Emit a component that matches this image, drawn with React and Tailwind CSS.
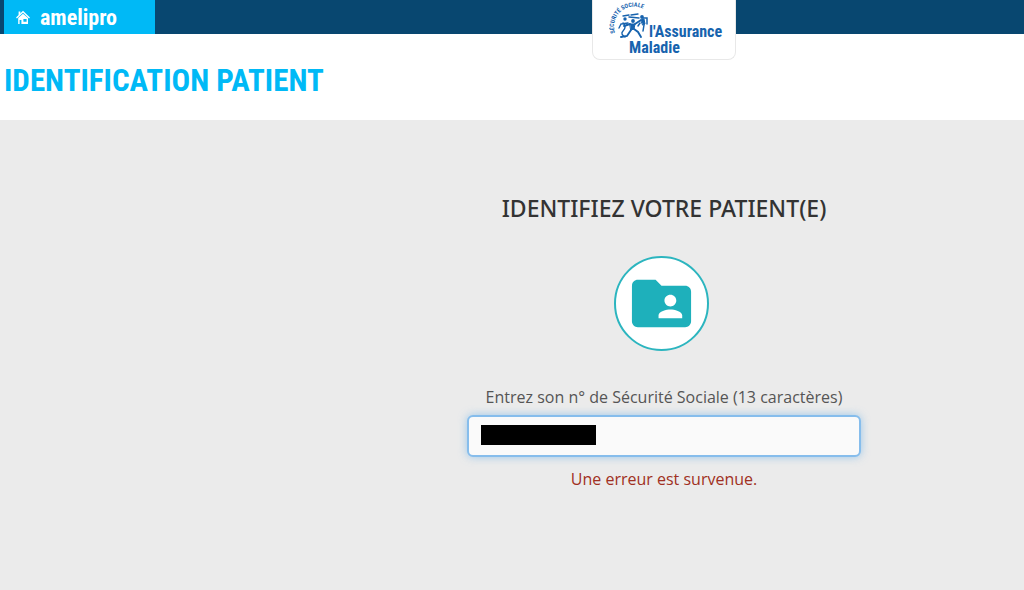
import { useState } from 'react';
import { MdFolderShared } from 'react-icons/md';

function HomeIcon() {
  return (
    <svg viewBox="0 0 14 14" className="h-3.5 w-3.5" fill="none" stroke="currentColor" aria-hidden="true">
      <path d="M0.5 8 L7 1.7 L13.5 8" strokeWidth="1.3" />
      <path d="M3.5 1.5 V5" strokeWidth="1.8" />
      <path fillRule="evenodd" fill="currentColor" stroke="none" d="M2.2 8 L7 3.7 L12 8 V14 H2.2 Z M3.6 10 V14 H5.4 V10 Z M7.4 9 V11.8 H10.6 V9 Z" />
    </svg>
  );
}

function LogoFigures() {
  return (
    <svg viewBox="0 0 44 42" className="absolute left-4 top-0 h-[42px] w-11" fill="none" stroke="currentColor" strokeLinecap="round" aria-hidden="true">
      <path id="logo-arc" d="M6 33 A20 20 0 0 1 43 18" stroke="none" />
      <text className="font-['Roboto_Condensed','Liberation_Sans',sans-serif] text-[6px] font-bold" fill="currentColor" stroke="none">
        <textPath href="#logo-arc">SÉCURITÉ SOCIALE</textPath>
      </text>
      {/* Left figure */}
      <circle cx="16" cy="19" r="1.7" fill="currentColor" stroke="none" />
      <path d="M12 24 L19 23 M14 23 Q18 27 14 31 Q11 34 16 37 M12 24 L10 28 M14 16 L20 15" strokeWidth="1.4" />
      {/* Centre figure */}
      <circle cx="24" cy="21" r="1.9" fill="currentColor" stroke="none" />
      <path d="M21 24 L26 24 L25 29 L22 30 Z" fill="currentColor" strokeWidth="1" />
      <path d="M21 24 L15 26 M26 24 L32 20 M22 30 L18 36 L12 37 M25 29 L29 32 L32 37" strokeWidth="1.9" />
      {/* Right figure */}
      <circle cx="33" cy="17" r="1.9" fill="currentColor" stroke="none" />
      <path d="M32 20 L35 19 L36 24 L34 25 Z" fill="currentColor" strokeWidth="1" />
      <path d="M20 17 L30 18 M34 18 L38 18 L38 24 M35 25 L34 31 M31 23 L29 26" strokeWidth="1.5" />
      <path d="M22 15 L29 14" strokeWidth="1.3" />
    </svg>
  );
}

export default function App() {
  const [nir, setNir] = useState('');

  return (
    <div className="min-h-screen bg-[#ebebeb] font-['Open_Sans',sans-serif]">
      {/* Top bar */}
      <header className="relative h-[34px] bg-[#084770] pl-1">
        <a
          href="#accueil"
          className="inline-flex h-full w-[151px] items-center gap-2.5 bg-[#00b9f6] pl-3 font-['Roboto_Condensed','Liberation_Sans_Narrow','Liberation_Sans',sans-serif] text-[22px] font-bold text-white"
        >
          <HomeIcon />
          amelipro
        </a>
        <div className="absolute inset-x-0 top-0 flex justify-center pl-76 pointer-events-none">
          <div className="relative h-[60px] w-36 rounded-b-lg border border-t-0 border-[#e8e8e8] bg-white font-['Roboto_Condensed','Liberation_Sans_Narrow','Liberation_Sans',sans-serif] text-base leading-4 font-bold text-[#1763ae]">
            <LogoFigures />
            <p className="pl-9 pt-6">
              <span className="block pl-5">l'Assurance</span>
              Maladie
            </p>
          </div>
        </div>
      </header>

      <div className="bg-white px-1 pt-6 pb-4">
        <h1 className="whitespace-nowrap font-['Roboto_Condensed','Liberation_Sans_Narrow','Liberation_Sans',sans-serif] text-[31px] leading-[46px] font-bold text-[#00b9f6]">
          IDENTIFICATION PATIENT
        </h1>
      </div>

      {/* Patient form */}
      <main className="flex justify-center pl-76 pt-18">
        <form className="flex w-[394px] flex-col items-center" onSubmit={e => e.preventDefault()}>
          <h2 className="whitespace-nowrap font-['Noto_Sans','Open_Sans',sans-serif] text-[23px] leading-8 font-medium text-[#333]">IDENTIFIEZ VOTRE PATIENT(E)</h2>
          <div className="mt-8 mr-1.5 flex h-[95px] w-[95px] items-center justify-center rounded-full border-2 border-[#2cb5bf] bg-white text-[#1eb0bb]">
            <MdFolderShared className="h-[71px] w-[71px]" aria-hidden="true" />
          </div>
          <label htmlFor="nir" className="mt-[34px] text-base whitespace-nowrap text-[#555]">
            Entrez son n° de Sécurité Sociale (13 caractères)
          </label>
          <div className="relative mt-1.5 w-full">
            <input
              id="nir"
              type="text"
              maxLength={13}
              value={nir}
              onChange={e => setNir(e.target.value)}
              className="h-[42px] w-full rounded-md border-2 border-[#86bdec] bg-[#fafafa] px-3 text-base text-[#555] shadow-[0_0_8px_rgba(102,175,233,0.6)] outline-none"
            />
            <span className="absolute left-3.5 top-2.5 h-5 w-[115px] bg-black pointer-events-none" />
          </div>
          <p role="alert" className="mt-2.5 text-base text-[#a03022]">Une erreur est survenue.</p>
        </form>
      </main>
    </div>
  );
}
